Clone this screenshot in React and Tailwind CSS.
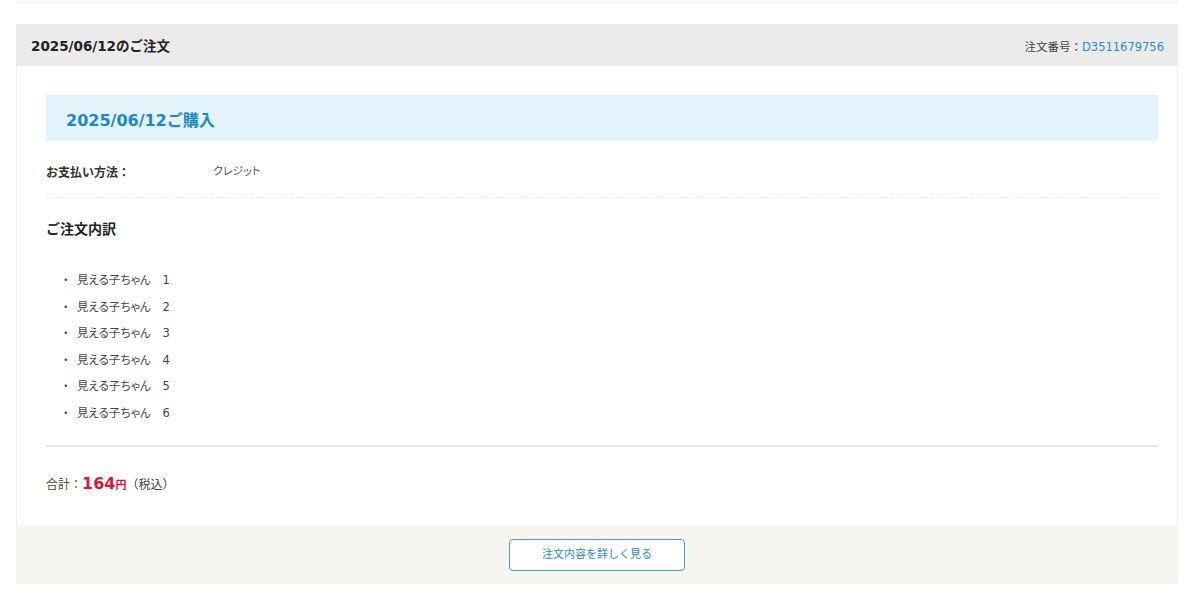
import React from 'react';

const items = ['1', '2', '3', '4', '5', '6'];

export default function App() {
  return (
    <div
      className="w-[1200px] h-[600px] bg-white overflow-hidden text-[#333]"
      style={{ fontFamily: '"DejaVu Sans", "Noto Sans CJK JP", sans-serif' }}
    >
      {/* bottom of the previous order card */}
      <div className="ml-[16px] w-[1162px] h-[4px] bg-[#f7f7f7]" />

      <div className="ml-[16px] mt-[20px] w-[1162px]">
        {/* card header */}
        <div className="h-[42px] bg-[#ebebeb] flex items-center justify-between pt-[4px] pl-[15px] pr-[14px]">
          <span className="text-[13.5px] font-bold text-[#222] leading-none">2025/06/12のご注文</span>
          <span className="mt-[2px] text-[11.5px] leading-none text-[#444]">
            注文番号：<span className="text-[#2b8cc4]">D3511679756</span>
          </span>
        </div>

        {/* card body */}
        <div className="border-x border-[#f0f0f0] pl-[29px] pr-[19px] pt-[29px] pb-[30px]">
          <div className="h-[46px] bg-[#e3f3fb] flex items-center pl-[20px] pt-[6px]">
            <span className="text-[16px] font-bold text-[#1f87c4] leading-none">2025/06/12ご購入</span>
          </div>

          <div className="flex items-center h-[57px] pt-[7px] border-b border-dashed border-[#ececec] text-[12px]">
            <span className="w-[167px] font-bold text-[#333]">お支払い方法：</span>
            <span className="text-[11px] text-[#555] [font-feature-settings:'palt']">クレジット</span>
          </div>

          <div className="pt-[24px] text-[14px] font-bold text-[#222] leading-none">ご注文内訳</div>

          <ul className="pt-[36px] pl-[14px] pb-[23px] flex flex-col gap-[9px]">
            {items.map((n) => (
              <li key={n} className="flex text-[11.5px] leading-[17.5px] text-[#444]">
                <span className="w-[17px]">・</span>
                <span className="[font-feature-settings:'palt']">見える子ちゃん</span>
                <span className="ml-[12px]">{n}</span>
              </li>
            ))}
          </ul>

          <div className="h-[2px] bg-[#e8e8e8]" />

          <div className="pt-[25px] flex items-baseline text-[12px] text-[#444]">
            <span>合計：</span>
            <span className="text-[16px] font-bold text-[#e0143c]">164</span>
            <span className="font-bold text-[#e0143c] text-[11px]">円</span>
            <span>（税込）</span>
          </div>
        </div>

        {/* card footer */}
        <div className="h-[58px] bg-[#f6f5f0] flex items-center justify-center">
          <button className="w-[176px] h-[32px] bg-white border border-[#4a9cc8] rounded-[4px] text-[11px] text-[#2b8cc4]">
            注文内容を詳しく見る
          </button>
        </div>
      </div>
    </div>
  );
}
